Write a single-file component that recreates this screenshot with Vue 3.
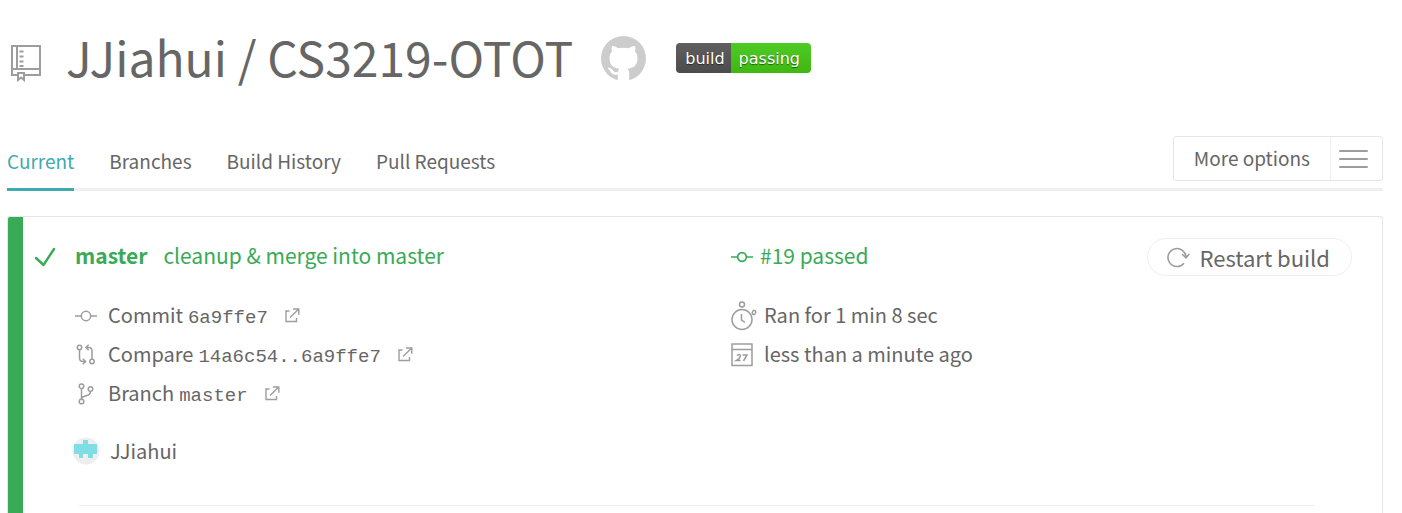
<script setup>
const tabs = [
  { label: 'Current', active: true },
  { label: 'Branches', active: false },
  { label: 'Build History', active: false },
  { label: 'Pull Requests', active: false },
]
const refs = [
  { icon: 'commit', label: 'Commit', value: '6a9ffe7' },
  { icon: 'compare', label: 'Compare', value: '14a6c54..6a9ffe7' },
  { icon: 'branch', label: 'Branch', value: 'master' },
]
</script>

<template>
  <div class="page">
    <header class="repo">
      <svg class="repo-icon" viewBox="0 0 32 38" width="32" height="38" fill="none" stroke="#9d9d9d" stroke-width="2">
        <path d="M7 31H2V2H30V31H15M2 25H30M7 2V25" />
        <path d="M9.500 7.500H13.500M9.500 12.500H13.500M9.500 17.500H13.500M9.500 22H13.500" />
        <path d="M8 29H14V36L11 33.500L8 36Z" />
      </svg>
      <h1><a href="#">JJiahui</a> / <a href="#">CS3219-OTOT</a></h1>
      <a class="github" href="#" aria-label="GitHub">
        <svg viewBox="0 0 45 45" width="45" height="45">
          <circle cx="22.500" cy="22.500" r="22.500" fill="#ccc" />
          <path d="M16.800 45V38.500C11 39.500 10 36.500 9 34.700C8 33 6.500 32.500 7 32C9.500 31.200 11.500 33.500 12.700 35.300C13.700 36.500 15.500 36.300 17 35.700C17.200 34.300 17.800 33.300 18.500 32.700C12.500 32 8.500 29.500 8.500 21.700C8.500 19.500 9.500 17.300 11 15.600C10.500 14 10.200 12 11.200 10C13.500 9.800 15.500 11 17.300 12.300Q22.500 11 27.700 12.300C29.500 11 31.500 9.800 33.800 10C34.800 12 34.500 14 34 15.600C35.500 17.300 36.500 19.500 36.500 21.700C36.500 29.500 32.500 32 26.500 32.700C27.700 34 28.200 35 28.200 37V45Z" fill="#fff" />
        </svg>
      </a>
      <button class="badge" type="button"><span class="build">build</span><span class="passing">passing</span></button>
    </header>

    <div class="bar">
      <nav class="tabs">
        <a v-for="t in tabs" :key="t.label" href="#" :class="{ active: t.active }">{{ t.label }}</a>
      </nav>
      <button class="options" type="button">
        <span class="options-label">More options</span>
        <span class="options-icon">
          <svg viewBox="0 0 30 20" width="30" height="20" stroke="#9d9d9d" stroke-width="2" stroke-linecap="round">
            <path d="M1 2H28M1 10H28M1 18H28" />
          </svg>
        </span>
      </button>
    </div>

    <main class="card">
      <svg class="check" viewBox="0 0 22 20" width="22" height="20" fill="none" stroke="#39aa56" stroke-width="2.400" stroke-linecap="round" stroke-linejoin="round">
        <path d="M2 11L9.500 18L20 2" />
      </svg>
      <div class="body">
        <div class="columns">
          <section>
            <h2 class="heading"><strong>master</strong><span>cleanup &amp; merge into master</span></h2>
            <ul>
              <li v-for="r in refs" :key="r.label">
                <a class="ref" href="#">
                  <svg class="icon" viewBox="0 0 22 22" width="22" height="22" fill="none" stroke="#9d9d9d" stroke-width="1.500">
                    <g v-if="r.icon === 'commit'">
                      <circle cx="11" cy="11" r="4.700" />
                      <path d="M0 11H6.300M15.700 11H22" />
                    </g>
                    <g v-else-if="r.icon === 'compare'">
                      <circle cx="4.500" cy="3.500" r="2.200" />
                      <circle cx="17" cy="17.500" r="2.200" />
                      <path d="M4.500 6V14Q4.500 17.500 8 17.500H10M7.800 14.700L10.600 17.500L7.800 20.300M17 15V7Q17 3.500 13.500 3.500H11.500M13.700 .700L10.900 3.500L13.700 6.300" />
                    </g>
                    <g v-else>
                      <circle cx="6.500" cy="3.200" r="2.300" />
                      <circle cx="15.500" cy="6" r="2.300" />
                      <circle cx="6.500" cy="18.500" r="2.300" />
                      <path d="M6.500 5.600V16M15.500 8.500Q15.500 11.500 12 12.500L9.500 13.300Q6.500 14.300 6.500 16" />
                    </g>
                  </svg>
                  <span class="ref-text">{{ r.label }}<code>{{ r.value }}</code></span>
                  <svg class="external" viewBox="0 0 15 15" width="15" height="15" fill="none" stroke="#9d9d9d" stroke-width="1.400">
                    <path d="M4.500 3H1V13.500H11.500V10M5 9.500L13.500 1.200M8 1H13.800V6.800" />
                  </svg>
                </a>
              </li>
            </ul>
          </section>
          <section>
            <div class="status-row">
              <a class="status" href="#">
                <svg viewBox="0 0 22 18" width="22" height="18" fill="none" stroke="#39aa56" stroke-width="1.700">
                  <circle cx="11" cy="11" r="4.300" />
                  <path d="M0 11H6.700M15.300 11H22" />
                </svg>
                <span>#19 passed</span>
              </a>
              <button class="restart" type="button">
                <svg viewBox="0 0 24 22" width="24" height="22" fill="none" stroke="#9d9d9d" stroke-width="1.600">
                  <path d="M18 17.200A9 9 0 1 1 20 11.500M16 8L20 11.800L23.300 8" />
                </svg>
                <span>Restart build</span>
              </button>
            </div>
            <ul>
              <li class="fact">
                <svg viewBox="0 0 26 30" width="26" height="30" fill="none" stroke="#9d9d9d" stroke-width="1.500">
                  <circle cx="11" cy="18.500" r="10" />
                  <circle cx="11" cy="3.500" r="2.500" />
                  <ellipse cx="23" cy="11.500" rx="1.600" ry="2.200" transform="rotate(20 23 11.500)" />
                  <path d="M10.500 13V19L14 21.500" />
                </svg>
                <span>Ran for 1 min 8 sec</span>
              </li>
              <li class="fact">
                <svg viewBox="0 0 26 24" width="26" height="24" fill="none" stroke="#9d9d9d" stroke-width="1.500">
                  <path d="M1 1H21V22.500H1ZM1 6.500H21" />
                  <path d="M6 12.500Q9.500 10.500 9.500 13Q9 15.500 5.500 17.500H9.500M11.500 12H16L12.500 18" />
                </svg>
                <span>less than a minute ago</span>
              </li>
            </ul>
          </section>
        </div>
        <a class="author" href="#">
          <svg viewBox="0 0 28 28" width="28" height="28">
            <circle cx="14" cy="14" r="13.500" fill="#eee" />
            <path d="M2 7H11V3H16V7H25V17H21V21H16V17H11V21H7V17H2Z" fill="#7fdde3" />
          </svg>
          <span>JJiahui</span>
        </a>
        <hr />
      </div>
    </main>
  </div>
</template>

<style>
body {
  margin: 0;
  background: #fff;
}
</style>

<style scoped>
.page {
  box-sizing: border-box;
  min-height: 100vh;
  display: flex;
  flex-direction: column;
  padding: 28px 19px 0 7px;
  font-family: "Noto Sans CJK SC", "Liberation Sans", sans-serif;
  font-size: 20px;
  color: #666;
}
a {
  color: inherit;
  text-decoration: none;
}
svg {
  flex: none;
  display: block;
}
button {
  padding: 0;
  background: #fff;
  font: inherit;
  color: inherit;
  cursor: pointer;
}
ul {
  margin: 0;
  padding: 0;
  list-style: none;
}
.repo {
  display: flex;
  align-items: center;
  height: 60px;
}
.repo-icon {
  margin: 10px 24px 0 3px;
}
h1 {
  margin: 0;
  font-size: 48px;
  font-weight: 400;
  line-height: 56px;
  padding-bottom: 4px;
}
.github {
  margin: 0 30px 0 28px;
}
.badge {
  display: flex;
  border: 0;
  border-radius: 4px;
  overflow: hidden;
  font: 16px/28px "DejaVu Sans", sans-serif;
  color: #fff;
  text-shadow: 0 1px 1px #0008;
}
.build {
  padding: 2px 6px 0 9px;
  background: linear-gradient(#5f5f5f, #4c4c4c);
}
.passing {
  padding: 2px 11px 0 8px;
  background: linear-gradient(#4fcb26, #3fb810);
}
.bar {
  display: flex;
  align-items: flex-start;
  justify-content: space-between;
  margin-top: 48px;
  height: 52px;
  border-bottom: 3px solid #efefef;
}
.tabs {
  display: flex;
  gap: 35px;
  font-size: 19px;
  line-height: 50px;
}
.tabs a {
  height: 52px;
  border-bottom: 3px solid transparent;
}
.tabs .active {
  color: #3eaaaf;
  border-color: #3eaaaf;
}
.options {
  display: flex;
  border: 1px solid #e6e6e6;
  border-radius: 3px;
  font-size: 19px;
  line-height: 43px;
}
.options-label {
  height: 43px;
  padding: 0 20px;
  line-height: 42px;
}
.options-icon {
  display: flex;
  align-items: center;
  padding: 0 13px 0 8px;
  border-left: 1px solid #efefef;
}
.card {
  flex: 1;
  display: flex;
  align-items: flex-start;
  margin-top: 25px;
  border: 1px solid #e6e6e6;
  border-bottom: 0;
  border-radius: 3px 3px 0 0;
  background: linear-gradient(#39aa56, #39aa56) left / 15px 100% no-repeat;
}
.check {
  margin: 30px 19px 0 26px;
}
.body {
  flex: 1;
}
.columns {
  display: grid;
  grid-template-columns: 1fr 1fr;
  column-gap: 5px;
  padding-top: 20px;
}
.heading,
.status-row {
  display: flex;
  align-items: center;
  height: 40px;
  margin: 0 0 19px;
  font-size: 21px;
  font-weight: 400;
  line-height: 36px;
  color: #39aa56;
}
.heading {
  gap: 16px;
  height: 36px;
  margin-bottom: 23px;
}
.ref,
.fact {
  display: flex;
  align-items: center;
  height: 39px;
  line-height: 38px;
}
.icon {
  margin-right: 11px;
}
.ref-text {
  display: flex;
  align-items: baseline;
  padding-top: 2px;
}
code {
  margin-left: 5px;
  font-family: "Liberation Mono", monospace;
  font-size: 19px;
}
.external {
  margin-left: 17px;
}
.status {
  display: flex;
  align-items: center;
  gap: 7px;
  padding-bottom: 4px;
}
.status-row {
  justify-content: space-between;
  padding-right: 30px;
}
.restart {
  display: flex;
  align-items: center;
  gap: 9px;
  padding: 0 21px 0 18px;
  border: 1px solid #efefef;
  border-radius: 19px;
  font-size: 22px;
  line-height: 36px;
  color: #666;
}
.fact {
  gap: 7px;
}
.fact span {
  padding-bottom: 2px;
}
.author {
  display: flex;
  align-items: center;
  gap: 10px;
  width: max-content;
  margin: 23px 0 0 -3px;
  line-height: 30px;
}
hr {
  margin: 39px 67px 0 4px;
  border: 0;
  border-top: 1px solid #efefef;
}
</style>
